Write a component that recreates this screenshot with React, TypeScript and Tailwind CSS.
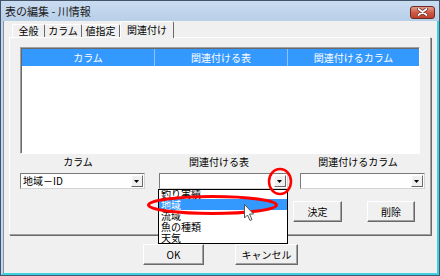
import React from "react"

const items = ["釣り実績", "地域", "流域", "魚の種類", "天気"]

// classic raised button
const Btn = ({ label, className }: { label: string; className: string }) => (
  <div
    className={
      "h-[21px] flex items-center justify-center bg-[#f0f0f0] border border-t-white border-l-white border-r-[#696969] border-b-[#696969] shadow-[inset_-1px_-1px_0_#a0a0a0] " +
      className
    }
  >
    {label}
  </div>
)

const Combo = ({ value, className }: { value: string; className: string }) => (
  <div
    className={
      "h-[16px] flex items-center bg-white border border-t-[#7a7a7a] border-l-[#7a7a7a] border-r-[#d4d4d4] border-b-[#d4d4d4] " +
      className
    }
  >
    <span className="pl-[2px] flex-1 leading-[12px]">{value}</span>
    <div className="w-[12px] h-[12px] mr-[1px] flex items-center justify-center bg-[#f0f0f0] border border-t-white border-l-white border-r-[#696969] border-b-[#696969]">
      <svg width="6" height="3" viewBox="0 0 6 3">
        <path d="M0 0 H5 L2.5 3 Z" fill="#000" />
      </svg>
    </div>
  </div>
)

const App = () => {
  return (
    <div className="relative w-[440px] h-[276px] overflow-hidden text-[10px] leading-[12px] text-black font-['Noto_Sans_CJK_JP','Noto_Sans',sans-serif]">

      {/* WINDOW */}

      <div className="w-full h-full flex flex-col border border-[#44546a] bg-[#c2d7ee]">

        {/* TITLE BAR */}

        <div className="h-[20px] shrink-0 flex items-center pl-[4px] pr-[4px] bg-gradient-to-b from-[#cadcf0] to-[#b8cfe8]">
          <span className="text-[11px] leading-[12px] text-[#1b1b1b]">表の編集 - 川情報</span>
          <div className="ml-auto mt-[2px] w-[25px] h-[13px] rounded-[3px] border border-[#6a2b25] bg-gradient-to-b from-[#e49c8c] via-[#cf5a45] to-[#c0402c] flex items-center justify-center">
            <svg width="11" height="8" viewBox="0 0 11 8">
              <path d="M1.5 1 L9.5 7 M9.5 1 L1.5 7" stroke="#5a2420" strokeWidth="3.2" strokeLinecap="round" />
              <path d="M1.5 1 L9.5 7 M9.5 1 L1.5 7" stroke="#fff" strokeWidth="1.8" strokeLinecap="round" />
            </svg>
          </div>
        </div>

        {/* FRAME */}

        <div className="flex-1 flex border-l-2 border-l-[#c2d7ee] border-r-2 border-r-[#3cd0e0] border-b-2 border-b-[#3cd0e0]">

          <div className="flex-1 flex flex-col bg-[#f0f0f0] border-l border-[#8494a8] pl-[5px]">

            {/* TABS */}

            <div className="h-[16px] flex items-end pl-[3px]">
              <div className="w-[33px] h-[13px] flex items-center justify-center border-t border-l border-r border-t-white border-l-white border-r-[#696969] rounded-t-[2px]">全般</div>
              <div className="w-[37px] h-[13px] flex items-center justify-center border-t border-r border-t-white border-r-[#696969] rounded-t-[2px]">カラム</div>
              <div className="w-[38px] h-[13px] flex items-center justify-center border-t border-r border-t-white border-r-[#696969] rounded-t-[2px]">値指定</div>
              <div className="relative z-10 -mb-[1px] w-[54px] h-[17px] flex items-start justify-center pt-[2px] bg-[#f0f0f0] border-t border-l border-r border-t-white border-l-white border-r-[#696969] rounded-t-[2px]">関連付け</div>
            </div>

            {/* PANEL */}

            <div className="w-[422px] h-[198px] pl-[10px] pt-[9px] border border-t-white border-l-white border-r-[#a0a0a0] border-b-[#a0a0a0] shadow-[1px_1px_0_#696969]">

              {/* LIST VIEW */}

              <div className="w-[400px] h-[107px] bg-white border border-t-[#a0a0a0] border-l-[#a0a0a0] border-r-white border-b-white shadow-[inset_1px_1px_0_#696969] pl-[1px] pt-[1px]">
                <div className="h-[17px] flex bg-[#3399ff] text-white">
                  <div className="w-[133px] flex items-center justify-center border-r border-[#8cc3ff]">カラム</div>
                  <div className="w-[133px] flex items-center justify-center border-r border-[#8cc3ff]">関連付ける表</div>
                  <div className="flex-1 flex items-center justify-center">関連付けるカラム</div>
                </div>
              </div>

              {/* LABELS */}

              <div className="mt-[2px] flex h-[12px]">
                <div className="w-[125px] pr-[9px] text-center">カラム</div>
                <div className="w-[129px] ml-[14px] pr-[9px] text-center">関連付ける表</div>
                <div className="w-[125px] ml-[12px] pr-[9px] text-center">関連付けるカラム</div>
              </div>

              {/* COMBOS */}

              <div className="mt-[5px] flex">
                <Combo value="地域－ID" className="w-[125px]" />
                <Combo value="" className="w-[129px] ml-[14px]" />
                <Combo value="" className="w-[125px] ml-[12px]" />
              </div>

              {/* ACTION BUTTONS */}

              <div className="mt-[12px] flex">
                <Btn label="決定" className="w-[49px] ml-[273px]" />
                <Btn label="削除" className="w-[48px] ml-[25px]" />
              </div>

            </div>

            {/* OK / CANCEL */}

            <div className="mt-[9px] flex">
              <Btn label="OK" className="w-[61px] ml-[134px]" />
              <Btn label="キャンセル" className="w-[63px] ml-[31px]" />
            </div>

          </div>
        </div>
      </div>

      {/* OPEN DROPDOWN LIST */}

      <div className="absolute left-[158px] top-[189px] w-[130px] h-[55px] bg-white border border-black overflow-hidden">
        <div className="-mt-[2px]">
          {items.map(item => (
            <div
              key={item}
              className={
                "h-[11px] leading-[11px] pl-[2px] " +
                (item === "地域" ? "bg-[#3399ff] text-white" : "")
              }
            >
              {item}
            </div>
          ))}
        </div>
      </div>

      {/* RED MARKS + CURSOR */}

      <svg className="absolute left-0 top-0 pointer-events-none" width="440" height="276" viewBox="0 0 440 276">
        <ellipse cx="212.5" cy="205" rx="64" ry="8.5" fill="none" stroke="#f00" strokeWidth="3" />
        <ellipse cx="280" cy="181.5" rx="11" ry="12.5" fill="none" stroke="#f00" strokeWidth="2.5" />
        <path
          d="M244.5 204.5 V218 L247.5 215 L250 220.5 L252 219.5 L249.5 214 L253.5 214 Z"
          fill="#fff"
          stroke="#555"
          strokeWidth="1"
        />
      </svg>

    </div>
  )
}

export default App
